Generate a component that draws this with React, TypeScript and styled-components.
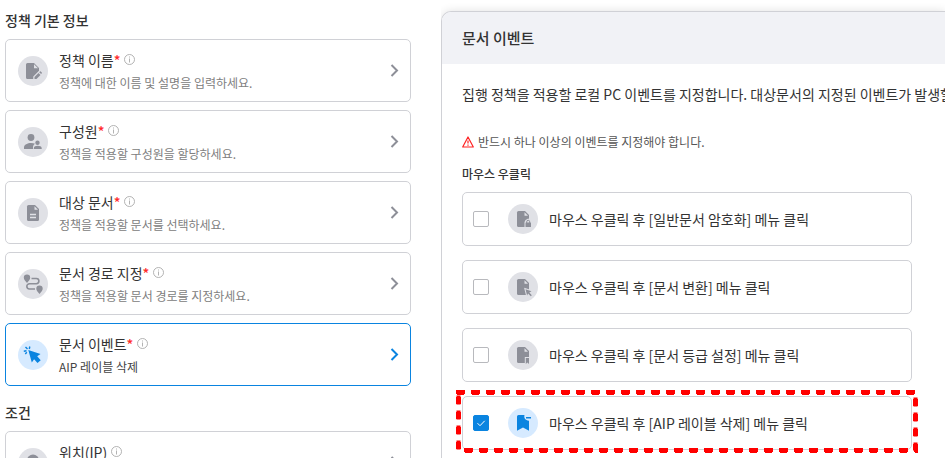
import React, { useState } from "react";
import styled, { createGlobalStyle } from "styled-components";

const GlobalStyle = createGlobalStyle`
  *, *::before, *::after { box-sizing: border-box; }
  body {
    margin: 0;
    background: #fff;
    color: #333;
    font-family: "Noto Sans CJK KR", "Noto Sans", sans-serif;
    font-size: 14px;
    line-height: 20px;
  }
  button { font: inherit; color: inherit; }
`;

const Page = styled.div`
  display: grid;
  grid-template-columns: minmax(240px, 406px) minmax(0, 1fr);
  column-gap: 30px;
  align-items: stretch;
  height: 100vh;
  padding-left: 5px;
  overflow: hidden;
`;

const Sidebar = styled.nav`
  padding-top: 10px;
`;

const Section = styled.section`
  margin-bottom: 16px;
`;

const SectionTitle = styled.h2`
  margin: 0 0 9px;
  font-size: 14px;
  line-height: 20px;
  font-weight: 500;
`;

const CardList = styled.div`
  display: grid;
  gap: 8px;
`;

const PolicyCard = styled.button<{ $active?: boolean }>`
  display: flex;
  align-items: center;
  gap: 11px;
  width: 100%;
  height: 63px;
  padding: 0 11px 0 12px;
  border: 1px solid ${(p) => (p.$active ? "#0a84e0" : "#d0d1d6")};
  border-radius: 5px;
  background: #fff;
  color: ${(p) => (p.$active ? "#0a84e0" : "#8d8f98")};
  text-align: left;
  cursor: pointer;
`;

const CardText = styled.span`
  flex: 1;
  min-width: 0;
`;

const CardTitle = styled.span`
  display: flex;
  align-items: center;
  height: 24px;
  color: #333;
  white-space: nowrap;
`;

const Required = styled.span`
  color: #ff2a2a;
  font-weight: 500;
`;

const CardHint = styled.span<{ $active?: boolean }>`
  display: block;
  font-size: 12px;
  line-height: 22px;
  color: ${(p) => (p.$active ? "#444" : "#808080")};
  white-space: nowrap;
`;

const InfoSvg = styled.svg`
  margin-left: 4px;
`;

const IconDisc = styled.svg<{ $active?: boolean }>`
  flex: none;
  width: 30px;
  height: 30px;
  border-radius: 50%;
  --disc: ${(p) => (p.$active ? "#d6eaff" : "#e0e1e6")};
  background: var(--disc);
  color: ${(p) => (p.$active ? "#0a84e0" : "#8d8f98")};
`;

const Panel = styled.main`
  margin-top: 11px;
  border: 1px solid #d0d1d6;
  border-right: 0;
  border-bottom: 0;
  border-radius: 10px 0 0 0;
  box-shadow: 0 0 10px rgba(0, 0, 0, 0.12);
  clip-path: inset(-11px 0 0 0);
  background: #fff;
`;

const PanelHeader = styled.header`
  padding: 16px 20px;
  border-radius: 9px 0 0 0;
  background: #f1f2f6;
`;

const PanelTitle = styled.h1`
  margin: 0;
  font-size: 15px;
  line-height: 20px;
  font-weight: 500;
`;

const PanelBody = styled.div`
  padding: 20px;
`;

const Description = styled.p`
  margin: 0 -20px 28px 0;
  overflow: hidden;
  white-space: nowrap;
`;

const Warning = styled.p`
  display: flex;
  align-items: center;
  gap: 4px;
  margin: 0 0 12px;
  font-size: 12px;
  line-height: 20px;
  color: #555;
`;

const EventGroup = styled.fieldset`
  display: grid;
  gap: 14px;
  max-width: 450px;
  min-width: 0;
  margin: 0;
  padding: 0;
  border: 0;
`;

const GroupTitle = styled.legend`
  margin-bottom: 8px;
  padding: 0;
  font-size: 12px;
  line-height: 20px;
  font-weight: 500;
`;

const EventRow = styled.label`
  position: relative;
  display: flex;
  align-items: center;
  height: 54px;
  padding: 0 10px;
  border: 1px solid #d0d1d6;
  border-radius: 5px;
  white-space: nowrap;
  cursor: pointer;
`;

const Checkbox = styled.input`
  appearance: none;
  flex: none;
  width: 16px;
  height: 16px;
  margin: 0 19px 0 0;
  border: 1px solid #b8b9bd;
  border-radius: 2px;
  background: #fff;
  &:checked {
    border-color: #0a84e0;
    background: #0a84e0
      url("data:image/svg+xml,%3Csvg xmlns='http://www.w3.org/2000/svg' viewBox='0 0 14 14'%3E%3Cpath d='M3.5 7.2 6 9.7l4.7-4.9' fill='none' stroke='white'/%3E%3C/svg%3E");
  }
`;

const EventName = styled.span`
  margin-left: 11px;
`;

const Marker = styled.svg`
  position: absolute;
  left: -7px;
  top: -7px;
  overflow: visible;
  pointer-events: none;
`;

type IconName = "edit" | "people" | "doc" | "route" | "click" | "pin" | "lock" | "convert" | "grade" | "label";

const sheet = "M10.5 7H17l4 4v10.500a1.500 1.500 0 0 1-1.500 1.500h-9A1.500 1.500 0 0 1 9 21.500v-13A1.500 1.500 0 0 1 10.500 7Z";
const Fold = () => <path d="M16.500 8.300v3.500H20Z" fill="var(--disc)" />;
const cut = { fill: "currentColor", stroke: "var(--disc)", strokeWidth: 2, paintOrder: "stroke" as const };

const drawings: Record<IconName, React.ReactNode> = {
  edit: (
    <>
      <path d="M9.500 7H16l5 5v3l-5.500 5.500V23h-6A1.500 1.500 0 0 1 8 21.500v-13A1.500 1.500 0 0 1 9.500 7Z" />
      <path d="M16 8.300v4h4Z" fill="var(--disc)" />
      <path {...cut} d="m16.500 21 4-4 2 2-4 4h-2Zm4.700-4.700.8-.8q.4-.3.800 0l1 1q.3.4 0 .8l-.7.800Z" />
    </>
  ),
  people: (
    <>
      <circle cx="13" cy="10.500" r="3.400" />
      <path d="M6 20.500c0-3 3.500-4.500 7-4.500 1.700 0 3 .3 4 .8-1.500 1-2 2.200-2 3.700v1.500H6Z" />
      <circle cx="19.500" cy="15.700" r="2.200" />
      <path d="M15.800 22v-.8c0-1.700 1.900-2.400 3.900-2.400s4 .7 4 2.400v.8Z" />
    </>
  ),
  doc: (
    <>
      <path d={sheet} />
      <Fold />
      <path d="M12 16.500h6M12 19.500h6" stroke="var(--disc)" strokeWidth="1.300" />
    </>
  ),
  route: (
    <>
      <path d="M9 5.500a3.200 3.200 0 0 1 3.200 3.200c0 1.800-1.500 3.300-3.200 5.200-1.700-1.900-3.200-3.400-3.200-5.200A3.200 3.200 0 0 1 9 5.500Z" />
      <path d="M21.500 16.500a3.200 3.200 0 0 1 3.200 3.200c0 1.800-1.500 3.300-3.200 5.200-1.700-1.900-3.200-3.400-3.200-5.200a3.200 3.200 0 0 1 3.200-3.200Z" />
      <path d="M13.500 9.500h4.800a2.600 2.600 0 0 1 0 5.200h-6.800a2.600 2.600 0 0 0 0 5.300H17" fill="none" stroke="currentColor" strokeWidth="1.600" />
    </>
  ),
  click: (
    <>
      <path d="m10.300 10 12.200 4-3.300 2.300 3.500 3.900-3.200 2.900-3.400-3.800-2.300 3.200Z" />
      <path d="M11.800 6.500 11.300 9M7.500 7l2 2M5.800 11.200l2.700-.4M8.800 12.300l-1.500 1.700" fill="none" stroke="currentColor" strokeWidth="1.400" />
    </>
  ),
  pin: <path d="M15 6.500a6 6 0 0 1 6 6c0 4-6 11-6 11s-6-7-6-11a6 6 0 0 1 6-6Z" />,
  lock: (
    <>
      <path d={sheet} />
      <Fold />
      <path d="M16.500 24v-6l1-2 2.700-1.500 2.500 1.500 1.300 2v6Z" fill="var(--disc)" />
      <path d="M18.700 19v-1.200a1.500 1.500 0 0 1 3 0V19" fill="none" stroke="currentColor" />
      <rect x="17.500" y="18.500" width="5.500" height="4.500" rx=".5" />
    </>
  ),
  convert: (
    <>
      <path d={sheet} />
      <Fold />
      <path {...cut} d="m17.500 17.300 6 2-2.200 1.200 2.500 2.700-1 1-2.700-2.600-1 2Z" />
    </>
  ),
  grade: (
    <>
      <path d={sheet} />
      <Fold />
      <path {...cut} d="M17.800 18H21v6l-1.600-1.500-1.600 1.500Z" />
    </>
  ),
  label: (
    <>
      <path d="M9 8.500A1.500 1.500 0 0 1 10.500 7h6c-.8 2.700.7 5.500 4.500 5.700v10L15 19.500l-6 3.200Z" />
      <path d="M18 9.700h5" stroke="currentColor" strokeWidth="1.500" />
    </>
  ),
};

const Icon = ({ name, active }: { name: IconName; active?: boolean }) => (
  <IconDisc $active={active} viewBox="0 0 30 30" fill="currentColor" aria-hidden="true">
    {drawings[name]}
  </IconDisc>
);

const Info = () => (
  <InfoSvg width="11" height="11" viewBox="0 0 11 11" fill="none" stroke="#aaa" strokeWidth=".9" aria-hidden="true">
    <circle cx="5.500" cy="5.500" r="5" />
    <path d="M5.500 4.500v4M5.500 2.500v1" />
  </InfoSvg>
);

const Chevron = () => (
  <svg width="9" height="13" viewBox="0 0 9 13" fill="none" stroke="currentColor" strokeWidth="2" aria-hidden="true">
    <path d="m1.500 1 5.500 5.500L1.500 12" />
  </svg>
);

interface Policy {
  icon: IconName;
  title: string;
  hint: string;
  required?: boolean;
}

const basics: Policy[] = [
  { icon: "edit", title: "정책 이름", hint: "정책에 대한 이름 및 설명을 입력하세요.", required: true },
  { icon: "people", title: "구성원", hint: "정책을 적용할 구성원을 할당하세요.", required: true },
  { icon: "doc", title: "대상 문서", hint: "정책을 적용할 문서를 선택하세요.", required: true },
  { icon: "route", title: "문서 경로 지정", hint: "정책을 적용할 문서 경로를 지정하세요.", required: true },
  { icon: "click", title: "문서 이벤트", hint: "AIP 레이블 삭제", required: true },
];

const conditions: Policy[] = [{ icon: "pin", title: "위치(IP)", hint: "" }];

const events: { icon: IconName; name: string }[] = [
  { icon: "lock", name: "마우스 우클릭 후 [일반문서 암호화] 메뉴 클릭" },
  { icon: "convert", name: "마우스 우클릭 후 [문서 변환] 메뉴 클릭" },
  { icon: "grade", name: "마우스 우클릭 후 [문서 등급 설정] 메뉴 클릭" },
  { icon: "label", name: "마우스 우클릭 후 [AIP 레이블 삭제] 메뉴 클릭" },
];

const PolicySection = ({ title, items, current }: { title: string; items: Policy[]; current: string }) => (
  <Section>
    <SectionTitle>{title}</SectionTitle>
    <CardList>
      {items.map((item) => {
        const active = item.title === current;
        return (
          <PolicyCard key={item.title} type="button" $active={active}>
            <Icon name={item.icon} active={active} />
            <CardText>
              <CardTitle>
                {item.title}
                {item.required && <Required>*</Required>}
                <Info />
              </CardTitle>
              <CardHint $active={active}>{item.hint || "\u00a0"}</CardHint>
            </CardText>
            <Chevron />
          </PolicyCard>
        );
      })}
    </CardList>
  </Section>
);

const outline = "M0 2.500H459.500V60.500H2.500V2.500";

const DashedMarker = () => (
  <Marker width="462" height="63" viewBox="0 0 462 63" fill="none" stroke="#f00" aria-hidden="true">
    <path d={outline} strokeWidth="4" strokeDasharray="9 6" transform="translate(0 -.5)" />
    <path d={outline} strokeWidth="5" strokeDasharray="7 8" strokeDashoffset="-1" />
  </Marker>
);

export default function App() {
  const [checked, setChecked] = useState<IconName[]>(["label"]);
  const toggle = (icon: IconName) =>
    setChecked((list) => (list.includes(icon) ? list.filter((i) => i !== icon) : [...list, icon]));

  return (
    <>
      <GlobalStyle />
      <Page>
        <Sidebar>
          <PolicySection title="정책 기본 정보" items={basics} current="문서 이벤트" />
          <PolicySection title="조건" items={conditions} current="문서 이벤트" />
        </Sidebar>
        <Panel>
          <PanelHeader>
            <PanelTitle>문서 이벤트</PanelTitle>
          </PanelHeader>
          <PanelBody>
            <Description>
              집행 정책을 적용할 로컬 PC 이벤트를 지정합니다. 대상문서의 지정된 이벤트가 발생할 때
            </Description>
            <Warning>
              <svg width="12" height="12" viewBox="0 0 12 12" fill="none" stroke="#f22" strokeWidth="1.200" aria-hidden="true">
                <path d="M6 1 11.300 11H.7Z" strokeLinejoin="round" />
                <path d="M6 4.500v3M6 8.500v1.200" />
              </svg>
              반드시 하나 이상의 이벤트를 지정해야 합니다.
            </Warning>
            <EventGroup>
              <GroupTitle>마우스 우클릭</GroupTitle>
              {events.map((event) => {
                const on = checked.includes(event.icon);
                return (
                  <EventRow key={event.icon}>
                    <Checkbox type="checkbox" checked={on} onChange={() => toggle(event.icon)} />
                    <Icon name={event.icon} active={on} />
                    <EventName>{event.name}</EventName>
                    {event.icon === "label" && <DashedMarker />}
                  </EventRow>
                );
              })}
            </EventGroup>
          </PanelBody>
        </Panel>
      </Page>
    </>
  );
}
